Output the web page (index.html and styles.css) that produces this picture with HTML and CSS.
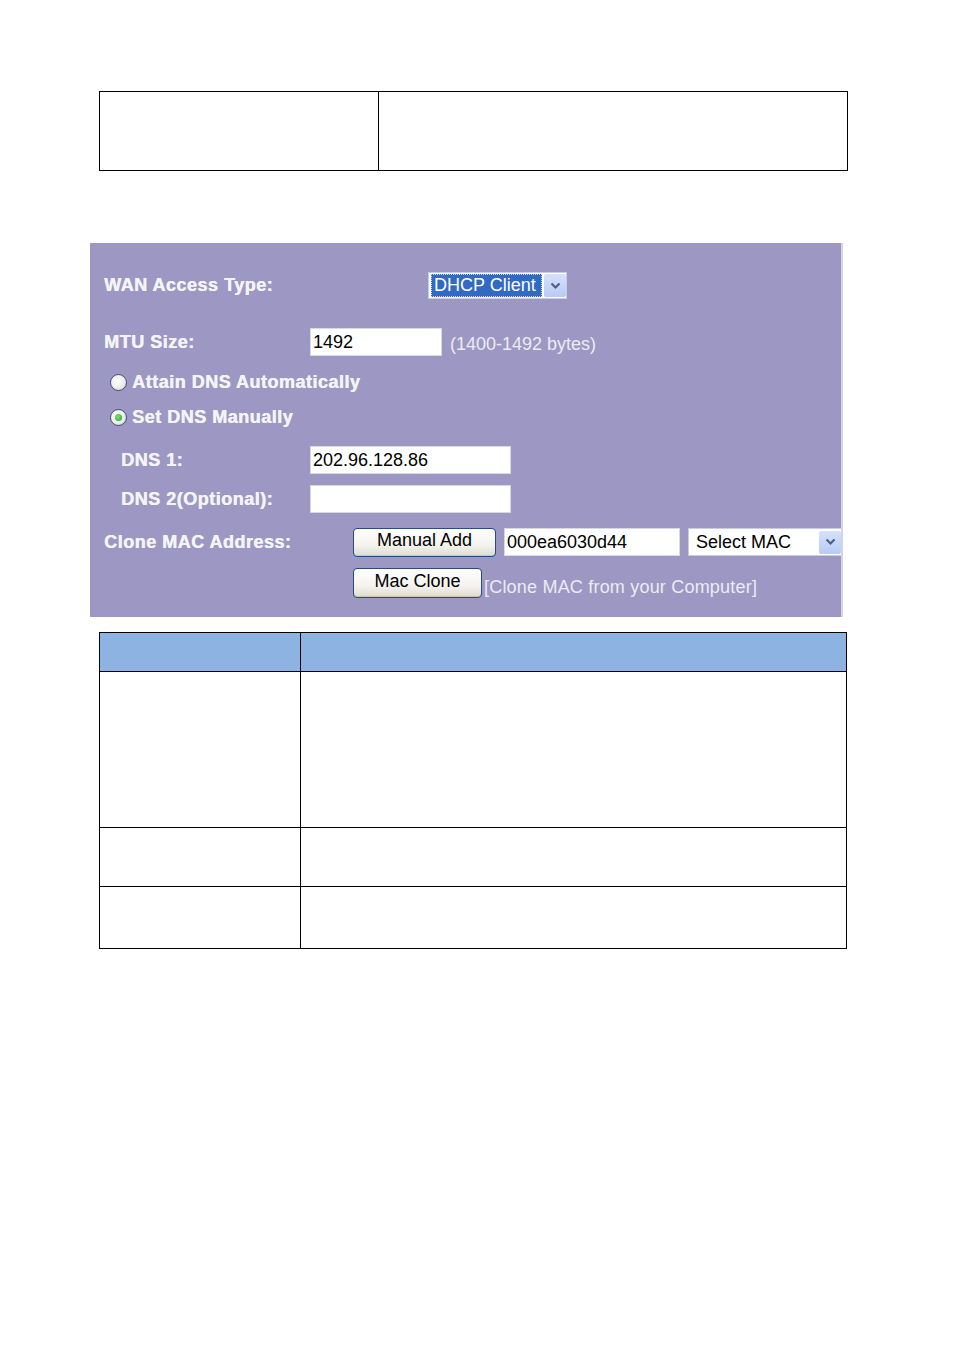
FILE: index.html
```html
<!DOCTYPE html>
<html>
<head>
<meta charset="utf-8">
<link rel="stylesheet" href="styles.css">
</head>
<body>
<div class="page">
  <table class="top-table">
    <tr><td class="tc1"></td><td class="tc2"></td></tr>
  </table>

  <div class="panel">
    <div class="row r-wan">
      <span class="label w-wan">WAN Access Type:</span>
      <div class="select sel-wan">
        <span class="sel-text hl">DHCP Client</span>
        <span class="sel-btn"><svg width="11" height="8" viewBox="0 0 11 8"><path d="M1.5 1.5 L5.5 5.5 L9.5 1.5" fill="none" stroke="#4d6185" stroke-width="2.2"/></svg></span>
      </div>
    </div>

    <div class="row r-mtu">
      <span class="label w-main">MTU Size:</span>
      <input class="field f-mtu" type="text" value="1492">
      <span class="hint">(1400-1492 bytes)</span>
    </div>

    <div class="row r-radio1">
      <span class="radio"></span>
      <span class="label">Attain DNS Automatically</span>
    </div>

    <div class="row r-radio2">
      <span class="radio checked"></span>
      <span class="label">Set DNS Manually</span>
    </div>

    <div class="row r-dns1">
      <span class="label w-sub">DNS 1:</span>
      <input class="field f-dns" type="text" value="202.96.128.86">
    </div>

    <div class="row r-dns2">
      <span class="label w-sub">DNS 2(Optional):</span>
      <input class="field f-dns" type="text" value="">
    </div>

    <div class="row r-clone">
      <span class="label w-clone">Clone MAC Address:</span>
      <button class="btn b-add">Manual Add</button>
      <input class="field f-mac" type="text" value="000ea6030d44">
      <div class="select sel-mac">
        <span class="sel-text">Select MAC</span>
        <span class="sel-btn"><svg width="11" height="8" viewBox="0 0 11 8"><path d="M1.5 1.5 L5.5 5.5 L9.5 1.5" fill="none" stroke="#4d6185" stroke-width="2.2"/></svg></span>
      </div>
    </div>

    <div class="row r-macclone">
      <span class="w-clone"></span>
      <button class="btn b-clone">Mac Clone</button>
      <span class="hint hint-clone">[Clone MAC from your Computer]</span>
    </div>
  </div>

  <table class="bottom-table">
    <tr class="head"><td class="bc1"></td><td></td></tr>
    <tr class="row-a"><td></td><td></td></tr>
    <tr class="row-b"><td></td><td></td></tr>
    <tr class="row-c"><td></td><td></td></tr>
  </table>
</div>
</body>
</html>
```

FILE: styles.css
```css
html, body {
  margin: 0;
  padding: 0;
  background: #ffffff;
}

.page {
  padding-top: 91px;
  font-family: "Liberation Sans", Arial, sans-serif;
}

.top-table {
  margin-left: 99px;
  width: 749px;
  height: 80px;
  border-collapse: collapse;
}
.top-table td {
  border: 1px solid #000;
  padding: 0;
}
.tc1 { width: 278px; }

.panel {
  margin-top: 72px;
  margin-left: 90px;
  width: 753px;
  height: 374px;
  box-sizing: border-box;
  background: #9d97c3;
  border-right: 2px solid #d6d2ea;
  padding: 29px 0 0 14px;
  display: flex;
  flex-direction: column;
  overflow: hidden;
}

.row {
  display: flex;
  align-items: center;
  flex: none;
}
.r-wan { height: 27px; }
.r-mtu { height: 28px; margin-top: 29px; }
.r-radio1 { height: 22px; margin-top: 15px; padding-left: 6px; }
.r-radio2 { height: 22px; margin-top: 13px; padding-left: 6px; }
.r-dns1 { height: 28px; margin-top: 18px; }
.r-dns2 { height: 28px; margin-top: 11px; }
.r-clone { height: 30px; margin-top: 14px; }
.r-macclone { height: 30px; margin-top: 11px; }

.label {
  color: #f4f4f6;
  font-weight: bold;
  font-size: 18px;
  white-space: nowrap;
  letter-spacing: 0.5px;
  text-shadow: 0.4px 0 0 #f4f4f6;
}
.w-wan { width: 324px; flex: none; }
.w-main { width: 206px; flex: none; }
.w-sub { width: 189px; flex: none; padding-left: 17px; }
.w-clone { width: 249px; flex: none; }

.field {
  box-sizing: border-box;
  height: 28px;
  border: 1px solid #d8d8e4;
  background: #fff;
  font-family: "Liberation Sans", Arial, sans-serif;
  font-size: 18px;
  color: #000;
  padding: 0 2px;
  margin: 0;
  outline: none;
  letter-spacing: 0;
}
.f-mtu { width: 132px; }
.f-dns { width: 201px; }
.f-mac { width: 176px; margin-left: 8px; height: 28px; }

.hint {
  color: #ecebf4;
  font-size: 18px;
  margin-left: 8px;
  margin-top: 4px;
  white-space: nowrap;
}
.hint-clone { margin-left: 2px; margin-top: 8px; letter-spacing: 0.2px; }

.select {
  box-sizing: border-box;
  display: flex;
  align-items: center;
  background: #fff;
  border: 1px solid #c8cce0;
  height: 27px;
  padding: 1px 1px 1px 2px;
  font-size: 18px;
  flex: none;
}
.sel-wan { width: 139px; }
.sel-mac { width: 155px; margin-left: 8px; height: 28px; }
.sel-text {
  flex: 1;
  height: 23px;
  line-height: 23px;
  color: #000;
  white-space: nowrap;
  padding-left: 5px;
}
.sel-text.hl {
  background: #316ac5;
  color: #fff;
  border: 1px dotted #c8d4ee;
  padding-left: 2px;
  box-sizing: border-box;
  flex: none;
  width: 111px;
  margin-right: 2px;
  line-height: 21px;
}
.sel-btn {
  width: 22px;
  height: 23px;
  flex: none;
  display: flex;
  align-items: center;
  justify-content: center;
  background: linear-gradient(#d6e2fb, #b8cbf4);
  border-radius: 2px;
}

.radio {
  width: 17px;
  height: 17px;
  box-sizing: border-box;
  border-radius: 50%;
  border: 1.5px solid #3f4f6e;
  background: radial-gradient(circle at 40% 40%, #ffffff 0%, #ececec 55%, #c9c9cf 100%);
  margin-right: 5px;
  flex: none;
  display: flex;
  align-items: center;
  justify-content: center;
}
.radio.checked::after {
  content: "";
  width: 7px;
  height: 7px;
  border-radius: 50%;
  background: radial-gradient(circle at 40% 40%, #7ee07e, #21a121);
}

.btn {
  box-sizing: border-box;
  height: 30px;
  border: 1px solid #2a4a80;
  border-radius: 4px;
  background: linear-gradient(#ffffff 0%, #f4f3ee 60%, #dedbd0 100%);
  font-family: "Liberation Sans", Arial, sans-serif;
  font-size: 18px;
  color: #000;
  padding: 0 0 3px;
  margin: 0;
  box-shadow: inset 0 -1px 0 #c9c6b8;
  flex: none;
}
.b-add { width: 143px; height: 29px; }
.b-clone { width: 129px; }

.bottom-table {
  margin-top: 15px;
  margin-left: 99px;
  width: 748px;
  border-collapse: collapse;
}
.bottom-table td {
  border: 1px solid #000;
  padding: 0;
}
.bc1 { width: 200px; }
.head td { background: #8db3e2; height: 38px; }
.row-a td { height: 155px; }
.row-b td { height: 58px; }
.row-c td { height: 61px; }
```
